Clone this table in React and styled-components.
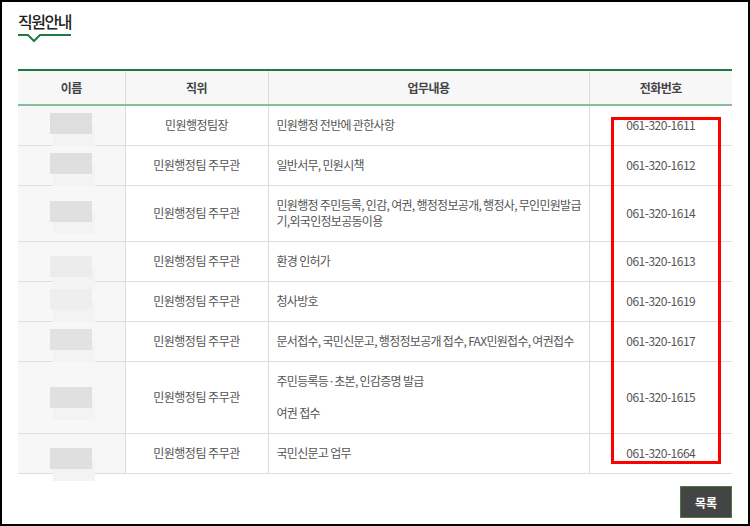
import React from 'react';
import styled, { createGlobalStyle } from 'styled-components';

const GlobalStyle = createGlobalStyle`
  html, body {
    margin: 0;
    padding: 0;
    background: #fff;
  }
  body {
    font-family: "Noto Sans CJK KR", "Noto Sans", sans-serif;
  }
`;

const staff = [
  { pos: '민원행정팀장', work: ['민원행정 전반에 관한사항'], tel: '061-320-1611', blur: '#dedede', shade: 'top' },
  { pos: '민원행정팀 주무관', work: ['일반서무, 민원시책'], tel: '061-320-1612', blur: '#dfdfdf', shade: 'top' },
  { pos: '민원행정팀 주무관', work: ['민원행정 주민등록, 인감, 여권, 행정정보공개, 행정사, 무인민원발급', '기,외국인정보공동이용'], tel: '061-320-1614', blur: '#e0e0e0', shade: 'top' },
  { pos: '민원행정팀 주무관', work: ['환경 인허가'], tel: '061-320-1613', blur: '#ececec', shade: 'bottom' },
  { pos: '민원행정팀 주무관', work: ['청사방호'], tel: '061-320-1619', blur: '#eeeeee', shade: 'top' },
  { pos: '민원행정팀 주무관', work: ['문서접수, 국민신문고, 행정정보공개 접수, FAX민원접수, 여권접수'], tel: '061-320-1617', blur: '#e2e2e2', shade: 'top' },
  { pos: '민원행정팀 주무관', work: ['주민등록등·초본, 인감증명 발급', '', '여권 접수'], tel: '061-320-1615', blur: '#e0e0e0', shade: 'mid' },
  { pos: '민원행정팀 주무관', work: ['국민신문고 업무'], tel: '061-320-1664', blur: '#dfdfdf', shade: 'bottom' },
];

const App = () => {
  return (
    <>
      <GlobalStyle />
      <Page>
        <Title>직원안내</Title>
        <TitleMark width="53" height="10" viewBox="0 0 53 10">
          <path d="M0 1 H10 L16 7 L22 1 H53" fill="none" stroke="#1d7a45" strokeWidth="2" />
        </TitleMark>

        <Table>
          <colgroup>
            <col style={{ width: 107 }} />
            <col style={{ width: 143 }} />
            <col style={{ width: 321 }} />
            <col style={{ width: 143 }} />
          </colgroup>
          <thead>
            <tr>
              <Th>이름</Th>
              <Th>직위</Th>
              <Th>업무내용</Th>
              <Th>전화번호</Th>
            </tr>
          </thead>
          <tbody>
            {staff.map((s, i) => (
              <tr key={i}>
                <NameCell>
                  <Blur shade={s.shade}>
                    <BlurBlock color={s.blur} />
                  </Blur>
                </NameCell>
                <Td>{s.pos}</Td>
                <WorkCell>
                  {s.work.map((w, j) => (
                    <Line key={j}>{w || '\u00a0'}</Line>
                  ))}
                </WorkCell>
                <Td>{s.tel}</Td>
              </tr>
            ))}
          </tbody>
        </Table>

        <Footer>
          <ListButton>목록</ListButton>
        </Footer>

        <Highlight />
      </Page>
    </>
  );
};

const Page = styled.div`
  position: relative;
  box-sizing: border-box;
  width: 750px;
  height: 526px;
  border: 2px solid #000;
  padding: 8px 16px 0 16px;
  overflow: hidden;
`;

const Title = styled.h2`
  margin: 0;
  font-size: 16px;
  line-height: 22px;
  font-weight: 500;
  color: #222;
  letter-spacing: -1.5px;
`;

const TitleMark = styled.svg`
  display: block;
  margin-top: 2px;
`;

const Table = styled.table`
  margin-top: 25px;
  width: 714px;
  border-collapse: collapse;
  table-layout: fixed;
  border-top: 2px solid #1d7a45;
  font-size: 12px;
  line-height: 16px;
  letter-spacing: -0.5px;
  color: #555;
`;

const Th = styled.th`
  height: 33px;
  padding: 0;
  background: #f7f7f7;
  border-bottom: 2px solid #86bd9c;
  border-left: 1px solid #dcdcdc;
  font-weight: 700;
  color: #444;
  text-align: center;
  &:first-child {
    border-left: none;
  }
`;

const Td = styled.td`
  padding: 11px 8px 12px;
  border-bottom: 1px solid #dedede;
  border-left: 1px solid #dcdcdc;
  text-align: center;
  vertical-align: middle;
`;

const NameCell = styled(Td)`
  padding: 0;
  border-left: none;
  background: #f7f7f7;
`;

const WorkCell = styled(Td)`
  text-align: left;
  letter-spacing: -0.7px;
`;

const Line = styled.div`
  line-height: 16px;
  white-space: nowrap;
`;

const Blur = styled.div`
  display: flex;
  justify-content: center;
  align-items: ${(p) => (p.shade === 'top' ? 'flex-start' : p.shade === 'bottom' ? 'flex-end' : 'center')};
  height: 100%;
  min-height: 39px;
  padding: ${(p) => (p.shade === 'top' ? '7px 0 0' : p.shade === 'bottom' ? '0 0 4px' : '0')};
  box-sizing: border-box;
`;

const BlurBlock = styled.div`
  width: 42px;
  height: 21px;
  background: ${(p) => p.color};
  box-shadow: 3px 12px 0 0 #f3f3f3;
`;

const Footer = styled.div`
  display: flex;
  justify-content: flex-end;
  width: 714px;
  margin-top: 12px;
`;

const ListButton = styled.button`
  width: 52px;
  height: 32px;
  background: #444;
  border: 1px solid #4f7a3c;
  color: #fff;
  font-family: inherit;
  font-size: 12px;
  font-weight: 700;
  padding: 0;
  cursor: pointer;
`;

const Highlight = styled.div`
  position: absolute;
  left: 609px;
  top: 115px;
  width: 110px;
  height: 347px;
  border: 3px solid #f00;
  box-sizing: border-box;
  pointer-events: none;
`;

export default App;
